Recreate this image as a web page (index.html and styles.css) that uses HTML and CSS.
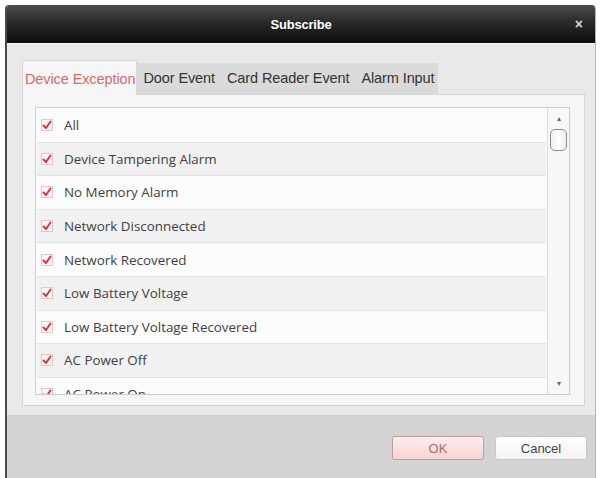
FILE: index.html
```html
<!DOCTYPE html>
<html lang="en">
    <head>
        <meta charset="UTF-8">
        <meta name="viewport" content="width=device-width, initial-scale=1.0">
        <title>Subscribe</title>
        <link rel="stylesheet" href="styles.css">
    </head>
    <body>
        <article class="janela">
            <header class="barra-titulo">
                <span></span>
                <h1>Subscribe</h1>
                <a class="fechar">&#215;</a>
            </header>

            <section class="conteudo">
                <nav class="abas">
                    <a class="aba ativa">Device Exception</a>
                    <a class="aba">Door Event</a>
                    <a class="aba">Card Reader Event</a>
                    <a class="aba">Alarm Input</a>
                </nav>

                <section class="painel">
                    <div class="lista">
                        <ul class="itens">
                            <li><i class="caixa"></i>All</li>
                            <li><i class="caixa"></i>Device Tampering Alarm</li>
                            <li><i class="caixa"></i>No Memory Alarm</li>
                            <li><i class="caixa"></i>Network Disconnected</li>
                            <li><i class="caixa"></i>Network Recovered</li>
                            <li><i class="caixa"></i>Low Battery Voltage</li>
                            <li><i class="caixa"></i>Low Battery Voltage Recovered</li>
                            <li><i class="caixa"></i>AC Power Off</li>
                            <li><i class="caixa"></i>AC Power On</li>
                        </ul>
                        <div class="rolagem">
                            <span class="seta">&#9652;</span>
                            <span class="polegar"></span>
                            <span class="espaco"></span>
                            <span class="seta">&#9662;</span>
                        </div>
                    </div>
                </section>
            </section>

            <footer class="rodape">
                <button class="botao ok">OK</button>
                <button class="botao">Cancel</button>
            </footer>
        </article>
    </body>
</html>
```

FILE: styles.css
```css
* {
    padding: 0px;
    margin: 0px;
    box-sizing: border-box;
}

body {
    background-color: #ffffff;
    font-family: "Liberation Sans", Arial, sans-serif;
}

.janela {
    margin: 5px 5px 0 5px;
    width: 591px;
    height: 473px;
    display: flex;
    flex-direction: column;
    border-left: 2px solid #4a4a4a;
    border-right: 1px solid #b4b4b4;
    border-radius: 4px 4px 0 0;
    overflow: hidden;
}

.barra-titulo {
    height: 38px;
    display: grid;
    grid-template-columns: 1fr auto 1fr;
    align-items: center;
    background: linear-gradient(#4c4c4c, #2a2a2a 45%, #0c0c0c);
    color: #fff;
}

.barra-titulo h1 {
    font-size: 13px;
    font-weight: bold;
    letter-spacing: -0.2px;
}

.fechar {
    justify-self: end;
    margin-right: 12px;
    font-size: 14px;
    font-weight: bold;
    color: #d8d8d8;
}

.conteudo {
    height: 372px;
    display: flex;
    flex-direction: column;
    padding: 15px 10px 10px 15px;
    background-color: #e9e9e9;
    border-top: 1px solid #f4f4f4;
}

.abas {
    display: flex;
    height: 35px;
}

.aba {
    margin-top: 4px;
    padding: 0 6px;
    line-height: 30px;
    font-size: 14.5px;
    letter-spacing: -0.1px;
    color: #333;
    background-color: #dadada;
    white-space: nowrap;
}

.aba:last-child {
    padding-right: 4px;
}

.aba.ativa {
    margin-top: 0;
    padding: 0 1px 0 2px;
    line-height: 36px;
    color: #d46a6a;
    background-color: #f6f6f6;
    border: 1px solid #d6d6d6;
    border-bottom: none;
    position: relative;
    top: 1px;
}

.painel {
    flex: 1;
    padding: 12px 14px 10px 12px;
    background-color: #f6f6f6;
    border: 1px solid #d6d6d6;
}

.lista {
    height: 288px;
    display: flex;
    border: 1px solid #cdcdcd;
    background-color: #fcfcfc;
    overflow: hidden;
}

.itens {
    flex: 1;
    list-style: none;
    padding: 1px;
}

.itens li {
    height: 33.6px;
    display: flex;
    align-items: center;
    gap: 11px;
    padding-left: 4px;
    font-family: "Open Sans", sans-serif;
    font-size: 13.4px;
    color: #3f3f3f;
    border-bottom: 1px solid #e2e2e2;
}

.itens li:nth-child(even) {
    background-color: #f1f1f1;
}

.caixa {
    width: 12px;
    height: 12px;
    flex: none;
    border: 1px solid #e8c4c4;
    background: #fff6f6 url("data:image/svg+xml;utf8,<svg xmlns='http://www.w3.org/2000/svg' width='10' height='10'><path d='M1.5 5.5 L4 8 L8.5 1.5' fill='none' stroke='%23d8343c' stroke-width='2' stroke-linecap='round' stroke-linejoin='round'/></svg>") center no-repeat;
}

.rolagem {
    width: 22px;
    display: flex;
    flex-direction: column;
    align-items: center;
    border-left: 1px solid #dcdcdc;
    background-color: #f8f8f8;
}

.seta {
    height: 20px;
    line-height: 20px;
    font-size: 8px;
    color: #666;
    margin-top: 1px;
}

.polegar {
    width: 17px;
    height: 22px;
    border: 1px solid #8c8c8c;
    border-radius: 5px;
    background: linear-gradient(90deg, #f0f0f0, #ffffff 50%, #ececec);
}

.espaco {
    flex: 1;
}

.rodape {
    flex: 1;
    display: flex;
    justify-content: flex-end;
    align-items: flex-start;
    gap: 11px;
    padding: 21px 8px 0 0;
    background-color: #d3d3d3;
}

.botao {
    width: 92px;
    height: 24px;
    font-family: "Liberation Sans", Arial, sans-serif;
    font-size: 13px;
    color: #444;
    background: linear-gradient(#ffffff, #f3f3f3);
    border: 1px solid #c8c8c8;
    border-radius: 3px;
}

.botao.ok {
    color: #b46a6a;
    background: linear-gradient(#fdeeee, #f5d4d4);
    border-color: #c79a9a;
}
```
